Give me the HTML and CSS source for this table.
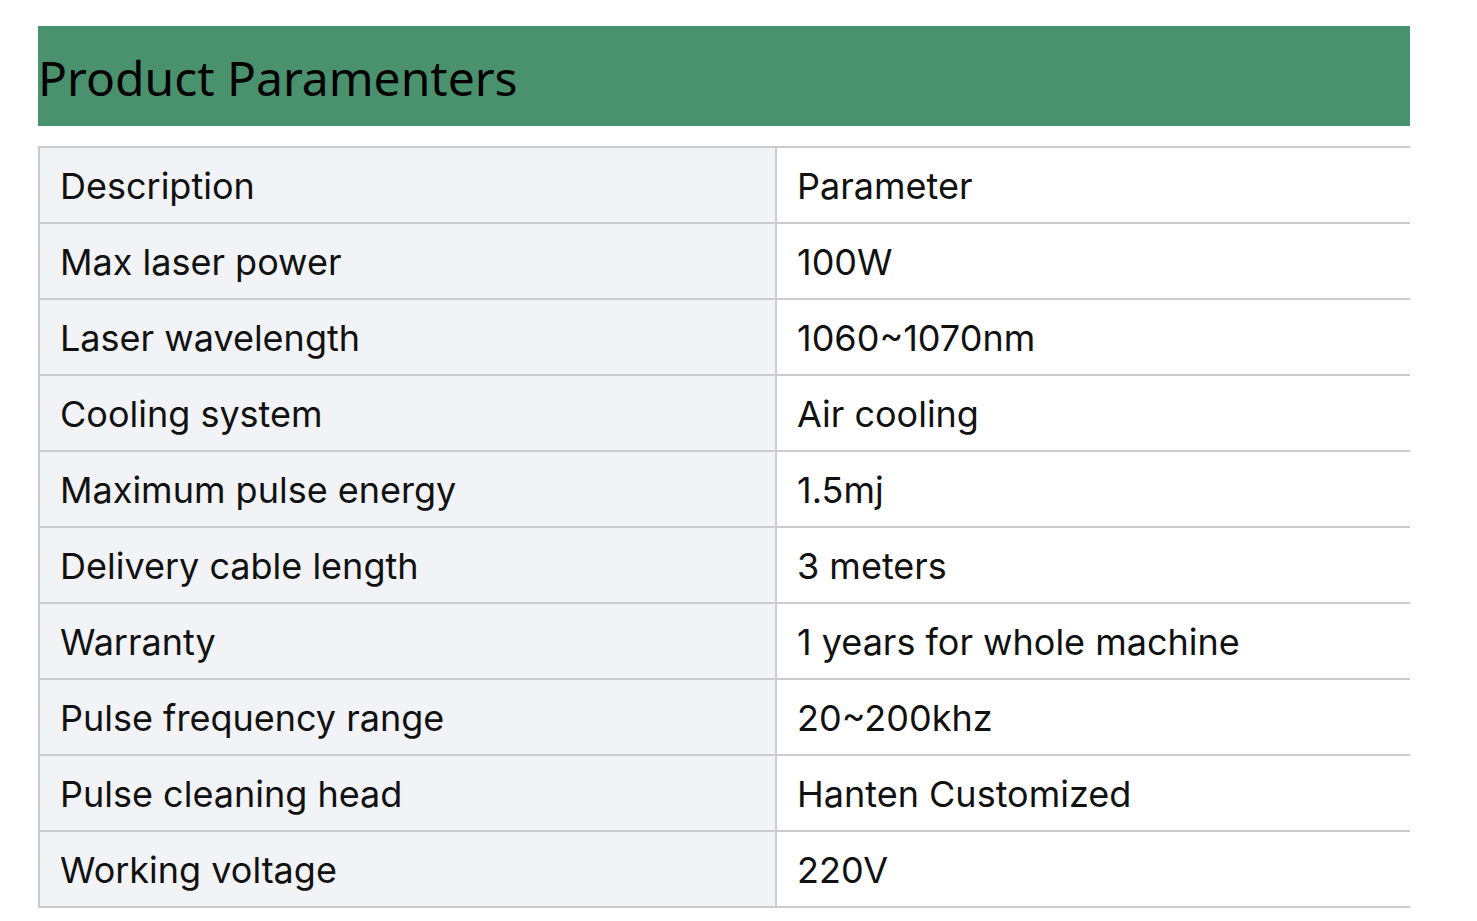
FILE: index.html
```html
<!DOCTYPE html>
<html>
<head>
<meta charset="utf-8">
<link rel="stylesheet" href="styles.css">
</head>
<body>
<div class="wrap">
  <h2 class="title">Product Paramenters</h2>
  <table class="params">
    <tr><td class="k">Description</td><td class="v">Parameter</td></tr>
    <tr><td class="k">Max laser power</td><td class="v">100W</td></tr>
    <tr><td class="k">Laser wavelength</td><td class="v">1060~1070nm</td></tr>
    <tr><td class="k">Cooling system</td><td class="v">Air cooling</td></tr>
    <tr><td class="k">Maximum pulse energy</td><td class="v">1.5mj</td></tr>
    <tr><td class="k">Delivery cable length</td><td class="v">3 meters</td></tr>
    <tr><td class="k">Warranty</td><td class="v">1 years for whole machine</td></tr>
    <tr><td class="k">Pulse frequency range</td><td class="v">20~200khz</td></tr>
    <tr><td class="k">Pulse cleaning head</td><td class="v">Hanten Customized</td></tr>
    <tr><td class="k">Working voltage</td><td class="v">220V</td></tr>
  </table>
</div>
</body>
</html>
```
FILE: styles.css
```css
html, body {
  margin: 0;
  padding: 0;
  background: #ffffff;
}
.wrap {
  width: 1372px;
  margin: 26px 0 0 38px;
}
.title {
  margin: 0;
  height: 100px;
  background: #4a916e;
  color: #000;
  font-family: "Noto Sans", sans-serif;
  font-weight: 400;
  font-size: 48px;
  line-height: 104px;
  padding-left: 0;
}
.params {
  margin-top: 20px;
  width: 100%;
  border-collapse: separate;
  border-spacing: 0;
  border-top: 2px solid #cccccc;
  border-left: 2px solid #cccccc;
  table-layout: fixed;
  font-family: "Inter", sans-serif;
  font-size: 36px;
  color: #111;
}
.params td {
  padding: 2px 0 0 20px;
  line-height: 72px;
  height: 72px;
  border-bottom: 2px solid #cccccc;
  white-space: nowrap;
}
.params td.k {
  width: 715px;
  background: #f2f3f7;
  border-right: 2px solid #cccccc;
}
.params td.v {
  background: #fff;
}
```
